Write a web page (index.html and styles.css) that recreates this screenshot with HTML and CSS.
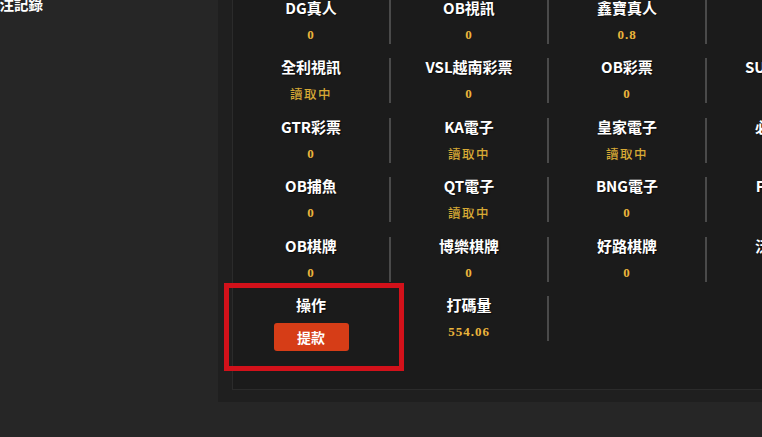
FILE: index.html
```html
<!DOCTYPE html>
<html lang="zh-Hant">
<head>
<meta charset="utf-8">
<link rel="stylesheet" href="styles.css">
</head>
<body>
<div class="page">
  <aside class="sidebar">
    <div class="side-item">投注記錄</div>
  </aside>
  <main class="main">
    <section class="panel">
      <div class="grid">
        <div class="cell"><div class="label">DG真人</div><div class="value">0</div></div>
        <div class="cell"><div class="label">OB視訊</div><div class="value">0</div></div>
        <div class="cell"><div class="label">鑫寶真人</div><div class="value">0.8</div></div>
        <div class="cell"><div class="label">電競</div><div class="value">0</div></div>

        <div class="cell"><div class="label">全利視訊</div><div class="value loading">讀取中</div></div>
        <div class="cell"><div class="label">VSL越南彩票</div><div class="value">0</div></div>
        <div class="cell"><div class="label">OB彩票</div><div class="value">0</div></div>
        <div class="cell"><div class="label">SUPER體育</div><div class="value">0</div></div>

        <div class="cell"><div class="label">GTR彩票</div><div class="value">0</div></div>
        <div class="cell"><div class="label">KA電子</div><div class="value loading">讀取中</div></div>
        <div class="cell"><div class="label">皇家電子</div><div class="value loading">讀取中</div></div>
        <div class="cell"><div class="label">必勝電子</div><div class="value">0</div></div>

        <div class="cell"><div class="label">OB捕魚</div><div class="value">0</div></div>
        <div class="cell"><div class="label">QT電子</div><div class="value loading">讀取中</div></div>
        <div class="cell"><div class="label">BNG電子</div><div class="value">0</div></div>
        <div class="cell"><div class="label">FTG電子</div><div class="value">0</div></div>

        <div class="cell"><div class="label">OB棋牌</div><div class="value">0</div></div>
        <div class="cell"><div class="label">博樂棋牌</div><div class="value">0</div></div>
        <div class="cell"><div class="label">好路棋牌</div><div class="value">0</div></div>
        <div class="cell"><div class="label">泛亞電競</div><div class="value">0</div></div>

        <div class="cell cell-op"><div class="label">操作</div><button class="btn">提款</button></div>
        <div class="cell"><div class="label">打碼量</div><div class="value">554.06</div></div>
      </div>
    </section>
    <div class="highlight"></div>
  </main>
</div>
</body>
</html>
```
FILE: styles.css
```css
html, body {
  margin: 0;
  padding: 0;
  background: #262626;
  width: 762px;
  height: 437px;
  overflow: hidden;
  font-family: "Noto Sans CJK TC", "Noto Sans", sans-serif;
}

.page {
  display: flex;
  align-items: flex-start;
  height: 437px;
}

.sidebar {
  width: 218px;
  flex: none;
  overflow: hidden;
}

.side-item {
  margin: -5px 0 0 -15px;
  color: #ffffff;
  font-size: 14.5px;
  font-weight: 700;
  line-height: 18px;
  white-space: nowrap;
}

.main {
  position: relative;
  flex: 1;
  height: 402px;
  background: #1f1f1f;
  padding-left: 14px;
  box-sizing: border-box;
}

.panel {
  height: 390px;
  background: #1b1b1b;
  border-left: 1px solid #2b2b2b;
  border-bottom: 1px solid #2b2b2b;
  box-sizing: border-box;
  overflow: hidden;
}

.grid {
  display: grid;
  grid-template-columns: repeat(4, 158px);
  row-gap: 14.6px;
  align-items: start;
  margin-top: -1.5px;
  width: 632px;
}

.cell {
  height: 45px;
  display: flex;
  flex-direction: column;
  align-items: center;
  border-right: 2px solid #4a4a4a;
  box-sizing: border-box;
}

.cell-op {
  height: auto;
  border-right-color: transparent;
}

.label {
  color: #ffffff;
  font-size: 15px;
  font-weight: 700;
  line-height: 18px;
  white-space: nowrap;
  text-shadow: 1px 1px 1px rgba(0, 0, 0, 0.6);
}

.value {
  margin-top: 9px;
  color: #ebb53b;
  font-family: "Liberation Serif", "Noto Sans CJK TC", serif;
  font-size: 13px;
  font-weight: 700;
  line-height: 18px;
  letter-spacing: 1px;
  white-space: nowrap;
}

.value.loading {
  color: #d7a935;
  font-family: "Noto Sans CJK TC", sans-serif;
  font-size: 12.5px;
  font-weight: 500;
  letter-spacing: 1.5px;
}

.btn {
  margin-top: 9px;
  width: 75px;
  height: 28px;
  border: none;
  border-radius: 3px;
  background: #d63d17;
  color: #ffffff;
  font-family: "Noto Sans CJK TC", sans-serif;
  font-size: 14px;
  font-weight: 700;
  line-height: 28px;
  padding: 0;
}

.highlight {
  position: absolute;
  left: 6px;
  top: 283px;
  width: 180px;
  height: 88px;
  border: 5px solid #d2111a;
  box-sizing: border-box;
  pointer-events: none;
}
```
